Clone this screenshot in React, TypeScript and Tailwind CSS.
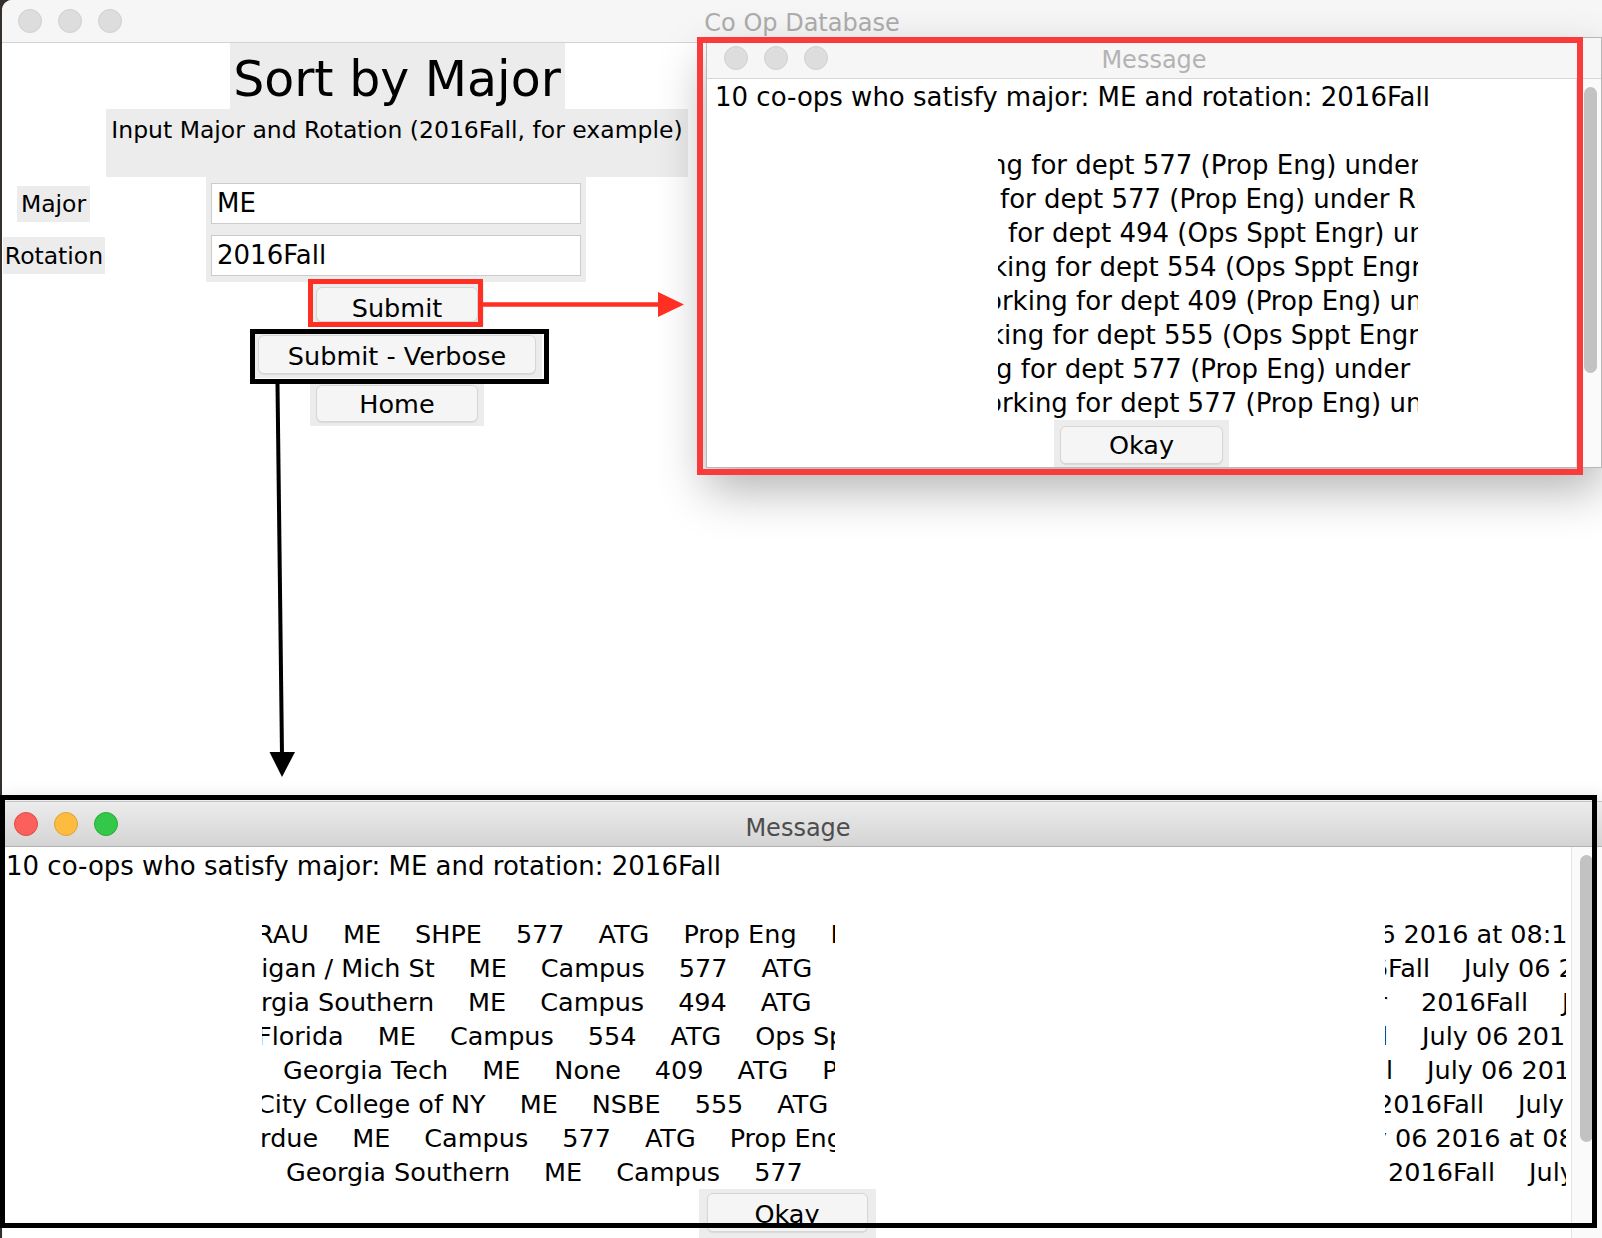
import React from "react";

type Row = { ml: string; tokens: string[] };

const leftRows: Row[] = [
  { ml: "-ml-[22px]", tokens: ["ERAU", "ME", "SHPE", "577", "ATG", "Prop Eng", "Rick"] },
  { ml: "-ml-[60px]", tokens: ["Michigan / Mich St", "ME", "Campus", "577", "ATG", "Prop Eng"] },
  { ml: "-ml-[52px]", tokens: ["Georgia Southern", "ME", "Campus", "494", "ATG", "Ops Sppt Engr"] },
  { ml: "-ml-[5px]", tokens: ["Florida", "ME", "Campus", "554", "ATG", "Ops Sppt Engr"] },
  { ml: "ml-[21px]", tokens: ["Georgia Tech", "ME", "None", "409", "ATG", "Prop Eng"] },
  { ml: "-ml-[5px]", tokens: ["City College of NY", "ME", "NSBE", "555", "ATG", "Ops Sppt Engr"] },
  { ml: "-ml-[33px]", tokens: ["Purdue", "ME", "Campus", "577", "ATG", "Prop Eng"] },
  { ml: "ml-[24px]", tokens: ["Georgia Southern", "ME", "Campus", "577", "ATG", "Prop Eng"] },
];

const rightRows: Row[] = [
  { ml: "-ml-[22px]", tokens: ["06 2016 at 08:15:22"] },
  { ml: "-ml-[62px]", tokens: ["2016Fall", "July 06 2016 at 08:15"] },
  { ml: "-ml-[57px]", tokens: ["Engr", "2016Fall", "July 06 2016"] },
  { ml: "-ml-[104px]", tokens: ["2016Fall", "July 06 2016 at 08:15"] },
  { ml: "-ml-[99px]", tokens: ["2016Fall", "July 06 2016 at 08:15"] },
  { ml: "-ml-[8px]", tokens: ["2016Fall", "July 06 2016"] },
  { ml: "-ml-[44px]", tokens: ["July 06 2016 at 08:15"] },
  { ml: "ml-[3px]", tokens: ["2016Fall", "July 06 2016"] },
];

const shortRows = [
  { ml: "-ml-[8px]", text: "ng for dept 577 (Prop Eng) under Rick Smith" },
  { ml: "ml-[2px]", text: "for dept 577 (Prop Eng) under Rick Smith" },
  { ml: "ml-[10px]", text: "for dept 494 (Ops Sppt Engr) under Rick" },
  { ml: "-ml-[6px]", text: "king for dept 554 (Ops Sppt Engr) under" },
  { ml: "-ml-[12px]", text: "orking for dept 409 (Prop Eng) under" },
  { ml: "-ml-[9px]", text: "king for dept 555 (Ops Sppt Engr) under" },
  { ml: "-ml-[2px]", text: "g for dept 577 (Prop Eng) under Rick" },
  { ml: "-ml-[12px]", text: "orking for dept 577 (Prop Eng) under" },
];

const HEADER = "10 co-ops who satisfy major: ME and rotation: 2016Fall";

const Lights = ({ active = false }: { active?: boolean }) => (
  <div className="flex gap-[16px]">
    <span
      className={
        active
          ? "w-[24px] h-[24px] rounded-full bg-[#fc605c] border border-[#de4a43]"
          : "w-[24px] h-[24px] rounded-full bg-[#dddddd] border border-[#d0d0d0]"
      }
    />
    <span
      className={
        active
          ? "w-[24px] h-[24px] rounded-full bg-[#fdbc40] border border-[#dea236]"
          : "w-[24px] h-[24px] rounded-full bg-[#dddddd] border border-[#d0d0d0]"
      }
    />
    <span
      className={
        active
          ? "w-[24px] h-[24px] rounded-full bg-[#34c84a] border border-[#27aa35]"
          : "w-[24px] h-[24px] rounded-full bg-[#dddddd] border border-[#d0d0d0]"
      }
    />
  </div>
);

const Button = ({ label, className }: { label: string; className: string }) => (
  <div
    className={`flex items-center justify-center rounded-[6px] bg-[#f5f5f5] border border-[#d6d6d6] shadow-[0_1px_1px_rgba(0,0,0,0.08)] text-[25.5px] ${className}`}
  >
    {label}
  </div>
);

const Field = ({ value }: { value: string }) => (
  <div className="h-[41px] bg-white border border-[#cbcbcb] pl-[5px] text-[26px] leading-[39px]">
    {value}
  </div>
);

const Label = ({ text, className }: { text: string; className: string }) => (
  <div className={`bg-[#ececec] text-[23.5px] text-center ${className}`}>{text}</div>
);

const MainWindow = () => (
  <div className="ml-[2px] h-full bg-white rounded-tl-[10px] flex flex-col">
    {/* title bar */}
    <div className="h-[43px] shrink-0 bg-[#f6f6f6] border-b border-[#d3d3d3] rounded-tl-[10px] grid grid-cols-[1fr_auto_1fr] items-center">
      <div className="pl-[16px]">
        <Lights />
      </div>
      <div className="pt-[4px] text-[24px] text-[#adadad]">Co Op Database</div>
      <div />
    </div>

    <div className="w-[790px] flex flex-col items-center">
      <div className="w-[335px] h-[66px] bg-[#ececec] text-center text-[49px] leading-[56px] pt-[9px] whitespace-nowrap">
        Sort by Major
      </div>
      <div className="w-[582px] h-[68px] bg-[#ececec] text-center text-[23.5px] leading-[30px] pt-[6px] whitespace-nowrap">
        Input Major and Rotation (2016Fall, for example)
      </div>

      <div className="w-full h-[105px] flex">
        <div className="w-[204px] flex flex-col items-start">
          <Label text="Major" className="ml-[15px] mt-[9px] w-[73px] h-[36px] leading-[36px]" />
          <Label text="Rotation" className="ml-[1px] mt-[15px] w-[102px] h-[37px] leading-[39px]" />
        </div>
        <div className="w-[380px] bg-[#ececec] pt-[6px] px-[5px] flex flex-col gap-[11px]">
          <Field value="ME" />
          <Field value="2016Fall" />
        </div>
      </div>

      <div className="mt-[1px] px-[6px] py-[4px] bg-[#ececec]">
        <Button label="Submit" className="w-[162px] h-[35px] pt-[7px]" />
      </div>
      <div className="mt-[5px] px-[6px] py-[4px] bg-[#ececec]">
        <Button label="Submit - Verbose" className="w-[278px] h-[39px] pt-[3px]" />
      </div>
      <div className="mt-[3px] px-[6px] py-[4px] bg-[#ececec]">
        <Button label="Home" className="w-[162px] h-[37px] pt-[2px]" />
      </div>
    </div>
  </div>
);

const TopDialog = () => (
  <div className="absolute left-[706px] top-[37px] w-[896px] h-[431px] bg-white border border-[#b8b8b8] shadow-[0_22px_45px_rgba(0,0,0,0.3)] flex flex-col">
    <div className="h-[41px] shrink-0 bg-[#f6f6f6] border-b border-[#d6d6d6] grid grid-cols-[1fr_auto_1fr] items-center">
      <div className="pl-[17px]">
        <Lights />
      </div>
      <div className="pt-[3px] text-[24px] text-[#b3b3b3]">Message</div>
      <div />
    </div>
    <div className="flex-1 flex min-h-0">
      <div className="w-[869px] flex flex-col">
        <div className="pl-[8px] pt-[1px] text-[26px] leading-[34px] whitespace-nowrap">{HEADER}</div>
        <div className="h-[34px]" />
        <div className="ml-[291px] w-[420px] overflow-hidden text-[26px] leading-[34px]">
          {shortRows.map((r, i) => (
            <div key={i} className={`whitespace-nowrap ${r.ml}`}>
              {r.text}
            </div>
          ))}
        </div>
        <div className="self-center bg-[#ececec] px-[6px] pt-[6px] pb-[3px]">
          <Button label="Okay" className="w-[163px] h-[38px]" />
        </div>
      </div>
      <div className="flex-1 border-l border-[#e4e4e4] bg-[#fafafa] pl-[7px] pt-[8px]">
        <div className="w-[13px] h-[286px] rounded-full bg-[#c2c2c2]" />
      </div>
    </div>
  </div>
);

const TokenRow = ({ row }: { row: Row }) => (
  <div className={`flex w-max gap-[34px] whitespace-nowrap ${row.ml}`}>
    {row.tokens.map((t, i) => (
      <span key={i}>{t}</span>
    ))}
  </div>
);

const BottomDialog = () => (
  <div className="absolute left-[3px] top-[801px] w-[1599px] h-[440px] bg-white border-t border-[#c4c4c4] shadow-[0_-3px_18px_rgba(0,0,0,0.12)] flex flex-col">
    <div className="h-[45px] shrink-0 bg-gradient-to-b from-[#ececec] to-[#d4d4d4] border-b border-[#b2b2b2] grid grid-cols-[1fr_auto_1fr] items-center">
      <div className="pl-[11px]">
        <Lights active />
      </div>
      <div className="pt-[7px] mr-[9px] text-[24px] text-[#4d4d4d]">Message</div>
      <div />
    </div>
    <div className="flex-1 flex min-h-0">
      <div className="w-[1568px] flex flex-col">
        <div className="pl-[3px] pt-[2px] text-[26px] leading-[34px] whitespace-nowrap">{HEADER}</div>
        <div className="h-[34px]" />
        <div className="flex flex-col text-[25.5px] leading-[34px]">
          {leftRows.map((r, i) => (
            <div key={i} className="flex h-[34px]">
              <div className="ml-[259px] w-[573px] overflow-hidden">
                <TokenRow row={r} />
              </div>
              <div className="ml-[550px] w-[181px] overflow-hidden">
                <TokenRow row={rightRows[i]} />
              </div>
            </div>
          ))}
        </div>
        <div className="self-center bg-[#ececec] px-[8px] pt-[4px] pb-[6px]">
          <Button label="Okay" className="w-[161px] h-[39px] pt-[3px]" />
        </div>
      </div>
      <div className="flex-1 border-l border-[#e4e4e4] bg-[#fafafa] pl-[8px] pt-[8px]">
        <div className="w-[13px] h-[287px] rounded-full bg-[#c2c2c2]" />
      </div>
    </div>
  </div>
);

export default function App() {
  return (
    <div className="relative w-[1602px] h-[1238px] overflow-hidden bg-[#35302b] text-black font-['DejaVu_Sans',sans-serif]">
      <MainWindow />
      <TopDialog />
      <BottomDialog />

      {/* annotation boxes */}
      <div className="absolute left-[308px] top-[279px] w-[175px] h-[48px] border-[5px] border-[#ff2f23]" />
      <div className="absolute left-[250px] top-[329px] w-[299px] h-[55px] border-[5px] border-black" />
      <div className="absolute left-[697px] top-[37px] w-[886px] h-[438px] border-[6px] border-[#fb3b3b]" />
      <div className="absolute left-0 top-[795px] w-[1597px] h-[433px] border-[5px] border-black" />

      {/* arrows */}
      <svg className="absolute inset-0 pointer-events-none" width="1602" height="1238">
        <line x1="483" y1="304.5" x2="662" y2="304.5" stroke="#ff2f23" strokeWidth="4.5" />
        <polygon points="658,292 684,304.5 658,317" fill="#ff2f23" />
        <line x1="277.5" y1="384" x2="282" y2="755" stroke="#000" strokeWidth="4" />
        <polygon points="269.5,752 295,752 282,777" fill="#000" />
      </svg>
    </div>
  );
}
